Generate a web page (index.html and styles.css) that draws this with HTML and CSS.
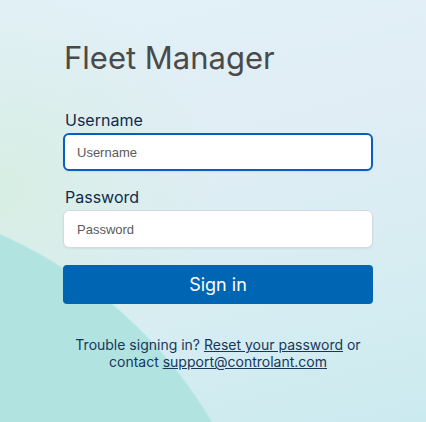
FILE: index.html
```html
<!DOCTYPE html>
<html lang="en">
<head>
    <meta charset="UTF-8">
    <meta name="viewport" content="width=device-width, initial-scale=1.0">
    <title>Fleet Manager - Sign in</title>
    <link rel="stylesheet" href="styles.css">
</head>
<body>
    <div class="container">
        <h1 class="title">Fleet Manager</h1>
        <form id="loginForm" class="login-form">
            <label for="username">Username</label>
            <input type="text" id="username" name="username" class="field field-focused" placeholder="Username">

            <label for="password">Password</label>
            <input type="password" id="password" name="password" class="field" placeholder="Password">

            <button type="button" class="btn-signin">Sign in</button>
        </form>
        <p class="help-text">
            Trouble signing in? <a href="#">Reset your password</a> or
            contact <a href="#">support@controlant.com</a>
        </p>
    </div>
</body>
</html>
```

FILE: styles.css
```css
html,
body {
    margin: 0;
    padding: 0;
    height: 100%;
}

body {
    font-family: "Inter", "Liberation Sans", sans-serif;
    background-color: #dcedf3;
    background-image:
        radial-gradient(circle 465px at -187px 659px, #b1e4e1 99.6%, rgba(177, 228, 225, 0) 100%),
        radial-gradient(ellipse 220px 200px at 0px 190px, rgba(214, 239, 226, 0.9), rgba(214, 239, 226, 0)),
        linear-gradient(165deg, #e2f0f7 0%, #e0edf5 40%, #d6edf2 70%, #cbeaef 100%);
    background-repeat: no-repeat;
}

.container {
    width: 310px;
    padding: 38px 0 0 63px;
}

.title {
    margin: 0 0 0 1px;
    font-size: 31px;
    font-weight: 400;
    line-height: 40px;
    color: #4a4a4a;
    letter-spacing: 0;
}

.login-form {
    display: flex;
    flex-direction: column;
    margin-top: 32px;
}

.login-form label {
    margin: 0 0 3px 2px;
    font-size: 16px;
    line-height: 20px;
    color: #102a4e;
}

.field {
    box-sizing: border-box;
    height: 38px;
    min-height: 38px;
    margin-bottom: 16px;
    padding: 0 13px;
    border: 1px solid #d3d9e0;
    border-radius: 6px;
    background-color: #fff;
    font-family: "Liberation Sans", Arial, sans-serif;
    font-size: 13px;
    color: #333;
    box-shadow: 0 1px 2px rgba(0, 0, 0, 0.06);
    outline: none;
}

.field::placeholder {
    color: #5a5a5a;
}

.field-focused {
    border: 2px solid #0a5ec3;
    padding: 0 12px;
}

.btn-signin {
    height: 39px;
    margin-top: 1px;
    border: none;
    border-radius: 4px;
    background-color: #0066b3;
    color: #fff;
    font-family: "Inter", "Liberation Sans", sans-serif;
    font-size: 18px;
    cursor: pointer;
}

.help-text {
    margin: 32px 0 0;
    text-align: center;
    font-size: 14px;
    line-height: 17px;
    color: #17375c;
}

.help-text a {
    color: #17375c;
}
```
